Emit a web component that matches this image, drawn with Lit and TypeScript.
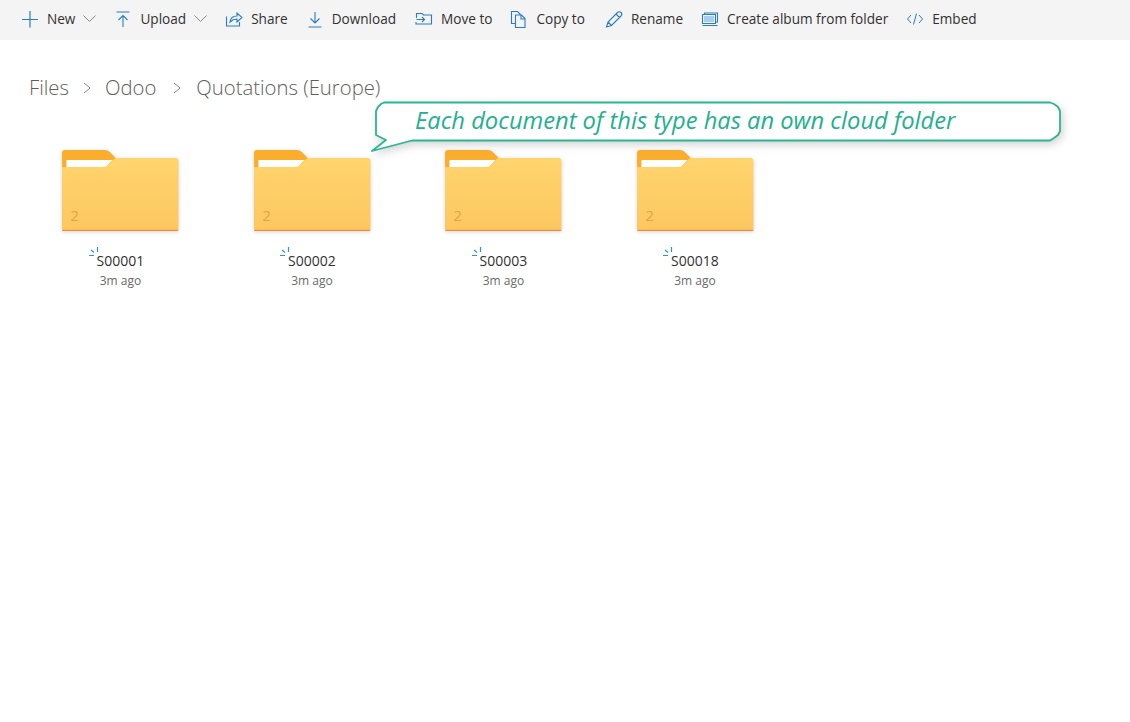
import { LitElement, html, css, svg } from "lit";
import { customElement } from "lit/decorators.js";

const icons: Record<string, any> = {
  plus: svg`<path d="M9 1v16.500M1 9.500h16" stroke-width="1.200"/>`,
  upload: svg`<path d="M2.500 2h13M9 17V5.500M4.500 10 9 5.500l4.500 4.500" stroke-width="1.100"/>`,
  share: svg`<path d="M1.500 6.500v9.500h13v-4M5 12c.5-4 3.500-6 7-6V3l5 4.500-5 4.500V9c-3 0-5 1-7 3z" stroke-width="1.100"/>`,
  download: svg`<path d="M9 2v11M4.500 8.500 9 13l4.500-4.500M2.500 17h13" stroke-width="1.100"/>`,
  move: svg`<path d="M1.500 8V3.500h5.500l1.500 1.500h8v9h-15.500v-2M1.500 9.500h8M7 7 9.500 9.500 7 12" stroke-width="1.100"/>`,
  copy: svg`<path d="M6 13.500H1.500V1.500h6l3 3M5.500 5h6l3.500 3.500v9h-9.500zM11 5v4h4" stroke-width="1.100"/>`,
  rename: svg`<path d="M1.500 17l1.500-5L12.500 2.500c1-1 2.500-1 3.500 0s1 2.500 0 3.500L6.500 15.500zM3 12l3.500 3.500M11 4l3.500 3.500" stroke-width="1.100"/>`,
  album: svg`<path d="M3 6h10v6H3z" fill="#a9cdec" stroke="none"/><path d="M1.500 4.500h13v9h-13zM3.500 4.500V3h13v9h-2M1.500 15.500h15" stroke-width="1.100"/>`,
  embed: svg`<path d="M5 5 1.500 9 5 13M13 5l3.500 4-3.500 4M10.500 3.500 7.500 14.500" stroke-width="1"/>`,
};

@customElement("folder-tile")
class FolderTile extends LitElement {
  static properties = { name: {} };
  name = "";
  static styles = css`
    :host { display: flex; flex-direction: column; align-items: center; width: 116.500px; }
    .art { width: 116.500px; height: 81px; display: block; overflow: visible; filter: drop-shadow(0 1px 2px rgba(0,0,0,.16)); }
    .count { font: 15px "Open Sans", sans-serif; fill: #e3a345; }
    .name { position: relative; margin-top: 21px; font: 14px/18px "Open Sans", sans-serif; color: #323130; }
    .spin { position: absolute; left: -9px; top: -6px; width: 11px; height: 11px; fill: none; stroke: #2f8fe0; stroke-width: 1.200; }
    .time { margin-top: 3px; font: 12px/16px "Open Sans", sans-serif; color: #6b6967; }
  `;
  render() {
    return html`
      <svg class="art" viewBox="0 0 117 81" preserveAspectRatio="none">
        <defs><linearGradient id="g" x1="0" y1="0" x2="0" y2="1"><stop offset="0" stop-color="#ffd46e"/><stop offset="1" stop-color="#fdc75f"/></linearGradient></defs>
        <path d="M0 3a3 3 0 0 1 3-3h40q3 0 5 2l6 6h60v20H0z" fill="#fbae2e"/>
        <path d="M4.500 10h46l-6 7H4.500z" fill="#fff"/>
        <path d="M0 17h42q2 0 4-2l6-6q1-1 3-1h59a3 3 0 0 1 3 3v67a3 3 0 0 1-3 3H3a3 3 0 0 1-3-3z" fill="url(#g)"/>
        <path d="M0 79.700h117v.300a1 1 0 0 1-1 1H1a1 1 0 0 1-1-1z" fill="#f58a3c"/>
        <text class="count" x="8.500" y="71">2</text>
      </svg>
      <div class="name">
        <svg class="spin" viewBox="0 0 11 11"><path d="M9.500 1V6M3 4l3 2.500M1 9.500h5"/></svg>
        ${this.name}
      </div>
      <div class="time">3m ago</div>`;
  }
}

@customElement("app-root")
class AppRoot extends LitElement {
  static styles = css`
    :host { display: block; width: 1130px; height: 722px; position: relative; background: #fff; overflow: hidden; }
    .bar { height: 40px; background: #f4f4f4; display: flex; align-items: center; padding: 0 0 3px 21px; font: 13.600px "Open Sans", sans-serif; color: #323130; box-sizing: border-box; }
    .cmd { display: flex; align-items: center; gap: 8px; margin-right: 18px; white-space: nowrap; }
    .cmd.w1 { margin-right: 19px; }
    .cmd.w2 { margin-right: 20px; }
    .cmd svg.ic { width: 18px; height: 18px; fill: none; stroke: #2a7cc7; display: block; }
    .chev { width: 13px; height: 8px; fill: none; stroke: #8a8886; display: block; }
    .crumbs { display: flex; align-items: center; padding: 33px 0 0 29px; font: 300 20.300px/29px "Open Sans", sans-serif; color: #605e5c; height: 29px; }
    .sep { width: 10px; height: 14px; margin: 0 13px; fill: none; stroke: #8a8886; }
    .sep.second { margin: 0 14px 0 16px; }
    .grid { display: flex; gap: 75px; padding: 48px 0 0 62.200px; }
    .callout { position: absolute; left: 370px; top: 100px; width: 692px; height: 54px; }
    .callout svg { position: absolute; inset: 0; width: 100%; height: 100%; overflow: visible; filter: drop-shadow(2px 3px 4px rgba(0,0,0,.18)); }
    .callout span { position: absolute; left: 45px; top: 5px; font: italic 23.700px/31px "Open Sans", sans-serif; color: #22b08e; white-space: nowrap; }
  `;
  cmd(icon: string, label: string, chevron = false, cls = "") {
    return html`<div class="cmd ${cls}">
      <svg class="ic" viewBox="0 0 18 18">${icons[icon]}</svg><span>${label}</span>
      ${chevron ? html`<svg class="chev" viewBox="0 0 13 8"><path d="M.5.500l6 6 6-6"/></svg>` : ""}
    </div>`;
  }
  render() {
    return html`
      <div class="bar">
        ${this.cmd("plus", "New", true)}${this.cmd("upload", "Upload", true)}${this.cmd("share", "Share")}${this.cmd("download", "Download", false, "w1")}${this.cmd("move", "Move to")}${this.cmd("copy", "Copy to", false, "w2")}${this.cmd("rename", "Rename")}${this.cmd("album", "Create album from folder")}${this.cmd("embed", "Embed")}
      </div>
      <div class="crumbs">Files<svg class="sep" viewBox="0 0 10 14"><path d="M2 2l6 5-6 5"/></svg>Odoo<svg class="sep second" viewBox="0 0 10 14"><path d="M2 2l6 5-6 5"/></svg>Quotations (Europe)</div>
      <div class="grid">
        <folder-tile name="S00001"></folder-tile><folder-tile name="S00002"></folder-tile><folder-tile name="S00003"></folder-tile><folder-tile name="S00018"></folder-tile>
      </div>
      <div class="callout">
        <svg viewBox="0 0 692 54"><path d="M14 2.500H680l4 1.500 4 3 2 4V31l-2 4-4 3-4 2.500H42L2 51 16 40 6 35V11l2-4 3-3z" fill="#fff" stroke="#2bb593" stroke-width="1.800" stroke-linejoin="round"/></svg>
        <span>Each document of this type has an own cloud folder</span>
      </div>`;
  }
}
